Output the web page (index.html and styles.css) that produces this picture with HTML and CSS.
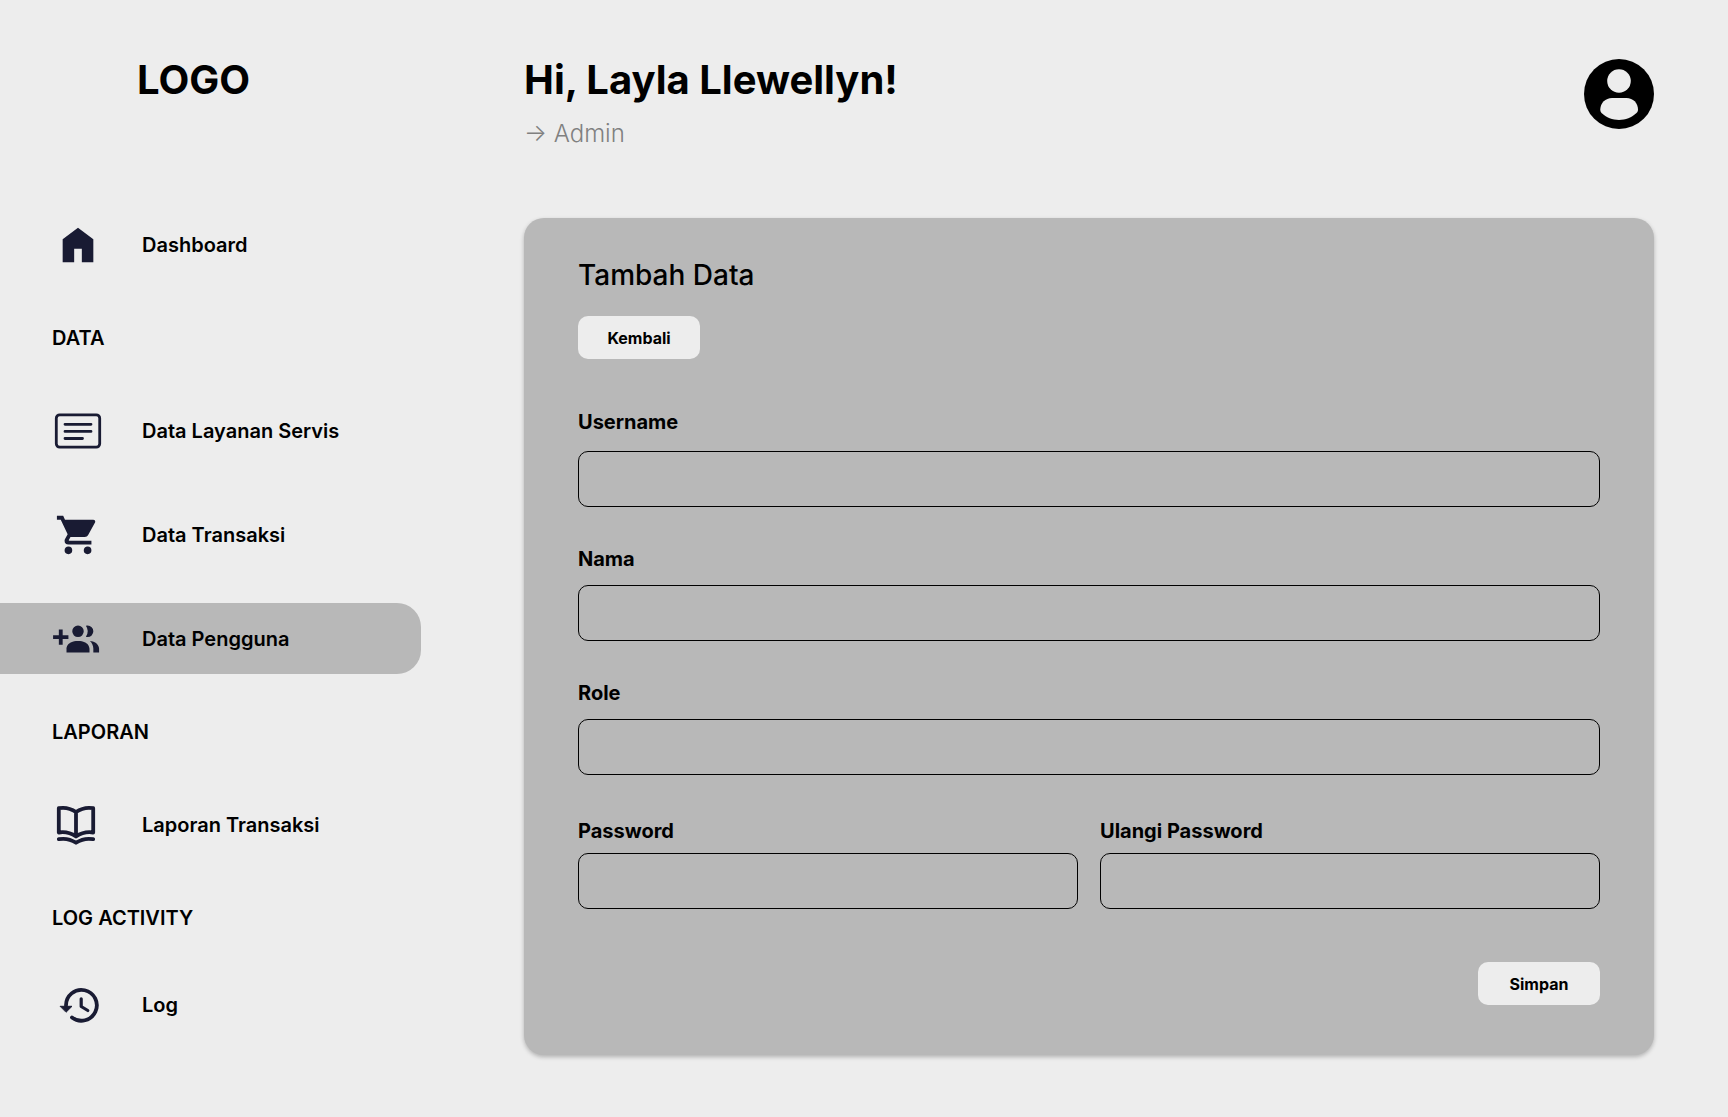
FILE: index.html
```html
<!DOCTYPE html>
<html lang="id">
<head>
<meta charset="utf-8">
<meta name="viewport" content="width=device-width, initial-scale=1">
<title>Tambah Data Pengguna</title>
<link rel="stylesheet" href="styles.css">
</head>
<body>
<div class="layout">
  <aside class="sidebar">
    <div class="logo">LOGO</div>
    <nav class="nav">
      <a class="nav-item" href="#">
        <svg class="icon" viewBox="0 0 24 24" aria-hidden="true"><path d="M4 21V9l8-6 8 6v12h-6v-7h-4v7z"/></svg>
        Dashboard
      </a>
      <h2 class="nav-heading">DATA</h2>
      <a class="nav-item" href="#">
        <svg class="icon icon-line" viewBox="0 0 46 46" aria-hidden="true"><rect x="1.3" y="6.8" width="43.4" height="32.4" rx="3.4" stroke-width="2.8"/><path d="M10 16.3h26M10 23.4h26M10 30.5h17.5" stroke-width="2.8"/></svg>
        Data Layanan Servis
      </a>
      <a class="nav-item" href="#">
        <svg class="icon" viewBox="0 0 24 24" aria-hidden="true"><path d="M17 18a2 2 0 0 1 2 2a2 2 0 0 1-2 2a2 2 0 0 1-2-2c0-1.11.89-2 2-2M1 2h3.27l.94 2H20a1 1 0 0 1 1 1c0 .17-.05.34-.12.5l-3.58 6.47c-.34.61-1 1.03-1.75 1.03H8.1l-.9 1.63-.03.12a.25.25 0 0 0 .25.25H19v2H7a2 2 0 0 1-2-2c0-.35.09-.68.24-.96l1.36-2.45L3 4H1V2m6 16a2 2 0 0 1 2 2a2 2 0 0 1-2 2a2 2 0 0 1-2-2c0-1.11.89-2 2-2z"/></svg>
        Data Transaksi
      </a>
      <a class="nav-item is-active" href="#" aria-current="page">
        <svg class="icon" viewBox="1 0 24 24" aria-hidden="true"><path d="M19 17v2H7v-2s0-4 6-4 6 4 6 4m-3-9a3 3 0 1 0-3 3 3 3 0 0 0 3-3m3.2 5.06A5.6 5.6 0 0 1 21 17v2h3v-2s0-3.45-4.8-3.94M18 5a2.91 2.91 0 0 0-.89.14 5 5 0 0 1 0 5.72A2.91 2.91 0 0 0 18 11a3 3 0 0 0 0-6M8 10H5V7H3v3H0v2h3v3h2v-3h3z"/></svg>
        Data Pengguna
      </a>
      <h2 class="nav-heading">LAPORAN</h2>
      <a class="nav-item" href="#">
        <svg class="icon icon-line" viewBox="0 0 46 46" aria-hidden="true"><path d="M3.8 6.2Q13 4.5 21 10Q29 4.5 38.2 6.2V30.5Q29 29 21 34.5Q13 29 3.8 30.5ZM21 10V34M3.8 37.2Q13 35.5 21 40.7Q29 35.5 38.2 37.2" stroke-width="3.8"/></svg>
        Laporan Transaksi
      </a>
      <div class="nav-group">
        <h2 class="nav-heading">LOG ACTIVITY</h2>
        <a class="nav-item" href="#">
          <svg class="icon icon-line" viewBox="0 0 46 46" aria-hidden="true"><path d="M11 23.5A15.4 15.4 0 1 1 17 35.5" stroke-width="3.8"/><path d="M26.2 16.8V24.5L32.8 28.5" stroke-width="3.2"/><path class="solid" d="M5.5 24.3h11.5l-5.7 5.7z"/></svg>
          Log
        </a>
      </div>
    </nav>
  </aside>
  <main class="main">
    <header class="header">
      <div>
        <h1 class="greeting">Hi, Layla Llewellyn!</h1>
        <p class="role">→ Admin</p>
      </div>
      <button class="avatar" type="button" aria-label="Profil">
        <svg viewBox="0 0 70 70" aria-hidden="true"><circle cx="35" cy="35" r="35"/><circle class="cutout" cx="35" cy="22" r="11.8"/><path class="cutout" d="M28 39H42.5C49 39 54 44 54 50.5C54 52 53.5 53 52.5 54C43 63.2 27 63.2 17.5 54C16.7 53 16.3 52 16.3 50.5C16.3 44 21.5 39 28 39Z"/></svg>
      </button>
    </header>
    <form class="card">
      <h2 class="card-title">Tambah Data</h2>
      <button class="btn" type="button">Kembali</button>
      <div class="fields">
        <div class="field field-lead">
          <label for="username">Username</label>
          <input id="username" type="text">
        </div>
        <div class="field">
          <label for="nama">Nama</label>
          <input id="nama" type="text">
        </div>
        <div class="field">
          <label for="role">Role</label>
          <input id="role" type="text">
        </div>
      </div>
      <div class="field-pair">
        <div class="field">
          <label for="password">Password</label>
          <input id="password" type="password">
        </div>
        <div class="field">
          <label for="password2">Ulangi Password</label>
          <input id="password2" type="password">
        </div>
      </div>
      <button class="btn btn-save" type="submit">Simpan</button>
    </form>
  </main>
</div>
</body>
</html>
```
FILE: styles.css
```css
* { box-sizing: border-box; }

body {
  margin: 0;
  background: #ededed;
  color: #000;
  font-family: Inter, "Liberation Sans", sans-serif;
}

h1, h2, p { margin: 0; }

.layout {
  display: grid;
  grid-template-columns: 421px 1fr;
  column-gap: 103px;
  min-height: 100vh;
  padding-right: 74px;
}

/* Sidebar */
.logo {
  padding: 56px 0 0 137px;
  font-size: 40px;
  font-weight: 700;
  line-height: 48px;
}

.nav {
  display: flex;
  flex-direction: column;
  gap: 33px;
  margin-top: 105px;
}

.nav-group {
  display: flex;
  flex-direction: column;
  gap: 27px;
}

.nav-item {
  display: flex;
  align-items: center;
  gap: 41px;
  height: 71px;
  padding-left: 55px;
  border-radius: 0 24px 24px 0;
  color: inherit;
  font-size: 20px;
  font-weight: 600;
  text-decoration: none;
}

.nav-item.is-active { background: #b8b8b8; }

.nav-heading {
  padding: 2px 0 0 52px;
  font-size: 20px;
  font-weight: 600;
  line-height: 47px;
}

.icon {
  flex: none;
  width: 46px;
  height: 46px;
  fill: #191b33;
  overflow: visible;
}

.icon-line {
  fill: none;
  stroke: #191b33;
  stroke-linecap: round;
  stroke-linejoin: round;
}

.solid { fill: #191b33; }

/* Header */
.header {
  display: flex;
  justify-content: space-between;
  align-items: flex-start;
  padding-top: 56px;
}

.greeting {
  font-size: 40px;
  font-weight: 700;
  line-height: 48px;
}

.role {
  margin-top: 15px;
  color: #808080;
  font-size: 24px;
  font-weight: 300;
  line-height: 30px;
}

.avatar {
  width: 70px;
  height: 70px;
  margin-top: 3px;
  padding: 0;
  border: 0;
  border-radius: 50%;
  background: none;
}

.avatar svg { display: block; }
.cutout { fill: #ededed; }

/* Form card */
.card {
  display: flex;
  flex-direction: column;
  align-items: flex-start;
  margin-top: 69px;
  padding: 39px 54px 50px;
  border-radius: 20px;
  background: #b8b8b8;
  box-shadow: 0 2px 4px rgba(0, 0, 0, 0.25);
}

.card-title {
  font-size: 28px;
  font-weight: 500;
  line-height: 36px;
}

.btn {
  width: 122px;
  height: 43px;
  margin-top: 23px;
  border: 0;
  border-radius: 10px;
  background: #ededed;
  color: #000;
  font: 700 16px Inter, "Liberation Sans", sans-serif;
}

.btn-save {
  align-self: flex-end;
  margin-top: 53px;
}

.fields {
  display: flex;
  flex-direction: column;
  gap: 40px;
  width: 100%;
  margin-top: 51px;
}

.field {
  display: flex;
  flex-direction: column;
  gap: 14px;
}

.field-lead { gap: 17px; }

.field label {
  font-size: 20px;
  font-weight: 700;
  line-height: 24px;
}

.field input {
  width: 100%;
  height: 56px;
  padding: 0 16px;
  border: 1px solid #000;
  border-radius: 10px;
  background: transparent;
  font: 400 20px Inter, "Liberation Sans", sans-serif;
}

.field-pair {
  display: grid;
  grid-template-columns: 1fr 1fr;
  column-gap: 22px;
  width: 100%;
  margin-top: 44px;
}

.field-pair .field { gap: 10px; }
```
